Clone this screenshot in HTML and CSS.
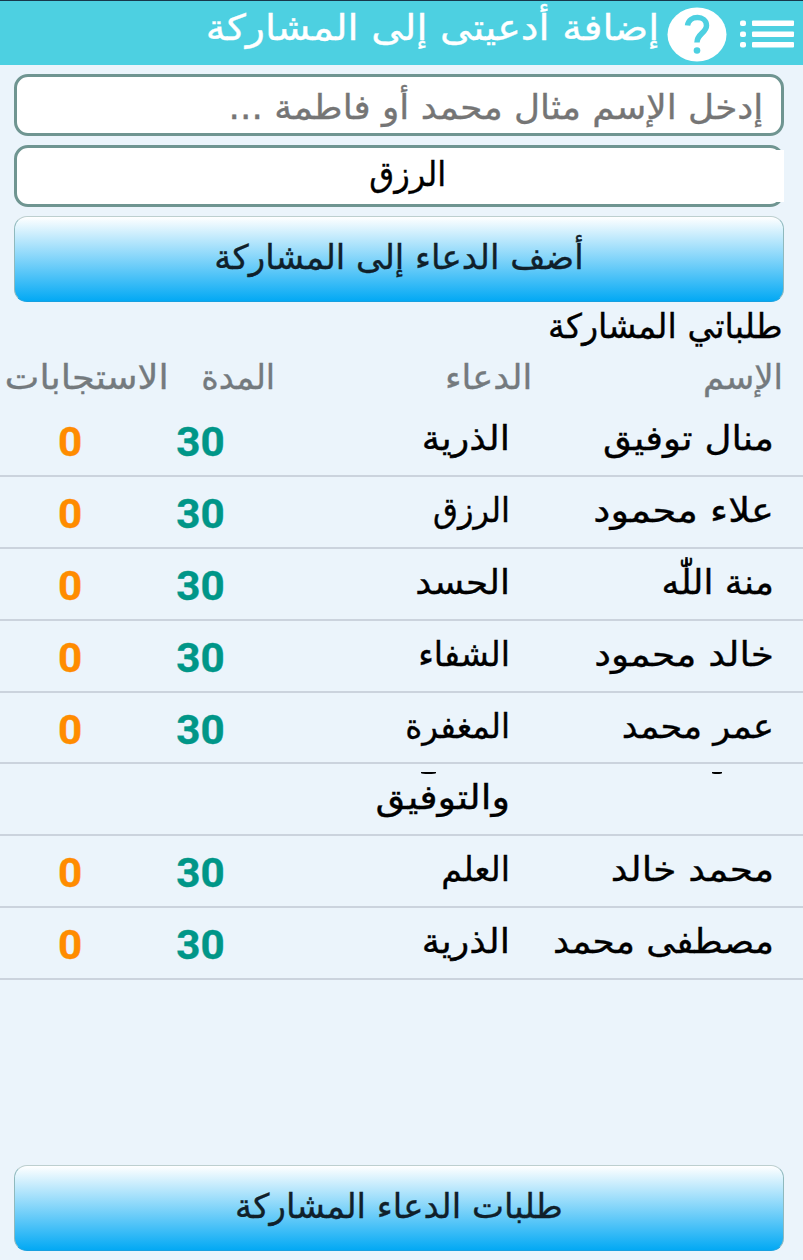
FILE: index.html
```html
<!DOCTYPE html>
<html lang="ar" dir="rtl">
<head>
<meta charset="utf-8">
<title>إضافة أدعيتى إلى المشاركة</title>
<link rel="stylesheet" href="styles.css">
</head>
<body>
<header class="bar">
  <svg class="menu" width="56" height="32" viewBox="0 0 56 32" fill="#fff"><rect x="1" y="1.500" width="6" height="5.500" rx="2"/><rect x="13" y="1.500" width="42" height="5.500" rx="1"/><rect x="1" y="12.500" width="6" height="5.500" rx="2"/><rect x="13" y="12.500" width="42" height="5.500" rx="1"/><rect x="1" y="23" width="6" height="5.500" rx="2"/><rect x="13" y="23" width="42" height="5.500" rx="1"/></svg>
  <svg class="help" width="60" height="56" viewBox="0 0 60 56"><ellipse cx="30" cy="27.500" rx="29.500" ry="27" fill="#fff"/><path d="M20.500 18.500C22 7.500 39.500 8 39.500 18.500C39.500 26 30 26.500 30 35.500" fill="none" stroke="#4dd0e1" stroke-width="5.500"/><circle cx="30" cy="43.500" r="3.300" fill="#4dd0e1"/></svg>
  <h1 class="title"><span class="t w110">إضافة أدعيتى إلى المشاركة</span></h1>
</header>
<main class="page">
  <div class="field hint"><span class="t w105">إدخل الإسم مثال محمد أو فاطمة ...</span></div>
  <div class="field select"><span class="t w94">الرزق</span></div>
  <button class="btn">أضف الدعاء إلى المشاركة</button>
  <h2 class="section"><span class="t w98">طلباتي المشاركة</span></h2>
  <div class="head"><span>الإسم</span><span><span class="t w103">الدعاء</span></span><span><span class="t w98">المدة</span></span><span><span class="t w108">الاستجابات</span></span></div>
  <div class="list">
    <div class="row"><span class="t w109">منال توفيق</span><span class="t w108">الذرية</span><b class="days">30</b><b class="count">0</b></div>
    <div class="row"><span class="t w112">علاء محمود</span><span class="t w94">الرزق</span><b class="days">30</b><b class="count">0</b></div>
    <div class="row"><span class="t w105">منة اللّٰه</span><span class="t w105">الحسد</span><b class="days">30</b><b class="count">0</b></div>
    <div class="row"><span class="t w110">خالد محمود</span><span class="t w97">الشفاء</span><b class="days">30</b><b class="count">0</b></div>
    <div class="row"><span class="t w103">عمر محمد</span><span class="t w95">المغفرة</span><b class="days">30</b><b class="count">0</b></div>
    <div class="row wrapped"><span></span><span class="t w112">والتوفيق</span></div>
    <div class="row"><span class="t w110">محمد خالد</span><span class="t w97">العلم</span><b class="days">30</b><b class="count">0</b></div>
    <div class="row"><span class="t w105">مصطفى محمد</span><span class="t w108">الذرية</span><b class="days">30</b><b class="count">0</b></div>
  </div>
  <button class="btn bottom">طلبات الدعاء المشاركة</button>
</main>
</body>
</html>
```
FILE: styles.css
```css
* { box-sizing: border-box; }
body { margin: 0; width: 803px; height: 1260px; display: flex; flex-direction: column; background: #ebf4fb; color: #000; font: 34px/1 "DejaVu Sans", sans-serif; -webkit-text-stroke: .35px currentColor; overflow: hidden; }

/* Horizontal fit of the lettering */
.t { display: inline-block; transform-origin: right center; white-space: nowrap; }
.w94 { transform: scaleX(.945); }
.w95 { transform: scaleX(.955); }
.w97 { transform: scaleX(.98); }
.w98 { transform: scaleX(.983); }
.w103 { transform: scaleX(1.035); }
.w105 { transform: scaleX(1.054); }
.w108 { transform: scaleX(1.08); }
.w109 { transform: scaleX(1.095); }
.w110 { transform: scaleX(1.103); }
.w112 { transform: scaleX(1.13); }

.bar { display: flex; flex: none; height: 65px; background: #4dd0e1; padding: 6px 8px; color: #fff; border-top: 1px solid #17384c; }
.menu { margin-top: 12px; }
.help { margin-right: 12px; }
.title { margin: 3px 8px 0 0; font-size: 36px; font-weight: 400; }

.page { flex: 1; display: flex; flex-direction: column; padding-top: 9px; }
.field { position: relative; flex: none; height: 62px; margin: 0 19px 9px 14px; border: 3px solid #6f9591; border-radius: 14px; background: #fff; padding: 10px 18px; }
.hint { color: #757575; padding-top: 13px; }
.select { padding: 9px 0 0 18px; text-align: center; }
.select .t { transform-origin: center; }
.select::after { content: ""; position: absolute; right: -3px; top: 2px; bottom: 2px; width: 8px; background: #fff; }
.btn { display: block; height: 86px; flex: none; margin: 0 19px 0 14px; padding: 0 0 5px; border: 1px solid #8fb9bd; border-top-color: #bdcfcf; border-bottom-color: #16a0e0; border-radius: 13px; background: linear-gradient(#fff, #03a9f4); font: inherit; color: #10202a; }

.section { margin: 7px 20px 0; font-size: 34px; font-weight: 400; }
.head { display: grid; grid-template-columns: 251px 257px 106px 169px; padding-right: 20px; margin-top: 17px; color: #747a7e; }
.list { margin-top: 11px; }
.row { position: relative; display: grid; grid-template-columns: 264px 243px 131px 130px; height: 71.9px; padding: 16px 29px 0 0; border-bottom: 2px solid #cbd3dd; }
.row b { margin-top: 1px; font: bold 41px/1 Roboto, sans-serif; text-align: center; transform: translateX(-1px) scaleX(1.03); }
.days { color: #009688; }
.count { color: #ff8c00; }

/* Tails of the scrolled-off first line in a two-line row */
.wrapped::before, .wrapped::after { content: ""; position: absolute; top: 8px; height: 2px; background: #000; border-radius: 0 0 50% 50%; }
.wrapped::before { left: 421px; width: 15px; }
.wrapped::after { left: 712px; width: 10px; }
.bottom { margin-top: auto; margin-bottom: 9px; }
```
